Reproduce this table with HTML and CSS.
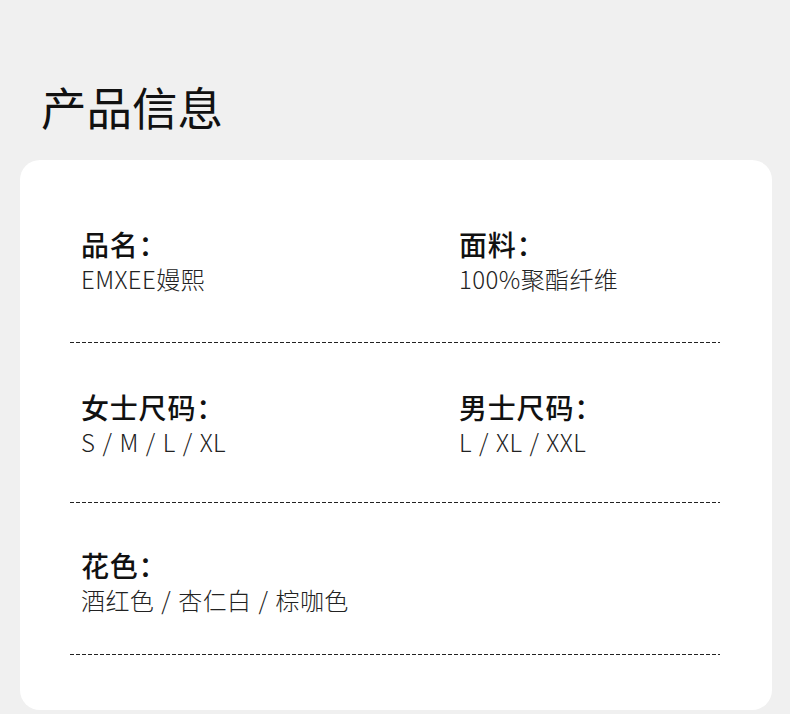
FILE: index.html
```html
<!DOCTYPE html>
<html lang="zh-CN">
<head>
<meta charset="utf-8">
<title>产品信息</title>
<link rel="stylesheet" href="styles.css">
</head>
<body>
<div class="page">
  <h1 class="title">产品信息</h1>
  <section class="card">
    <div class="row row-1">
      <div class="field">
        <div class="label">品名：</div>
        <div class="value">EMXEE嫚熙</div>
      </div>
      <div class="field">
        <div class="label">面料：</div>
        <div class="value">100%聚酯纤维</div>
      </div>
    </div>
    <div class="divider"></div>
    <div class="row row-2">
      <div class="field">
        <div class="label">女士尺码：</div>
        <div class="value">S / M / L / XL</div>
      </div>
      <div class="field">
        <div class="label">男士尺码：</div>
        <div class="value">L / XL / XXL</div>
      </div>
    </div>
    <div class="divider"></div>
    <div class="row row-3">
      <div class="field">
        <div class="label">花色：</div>
        <div class="value">酒红色 / 杏仁白 / 棕咖色</div>
      </div>
    </div>
    <div class="divider"></div>
  </section>
</div>
</body>
</html>
```

FILE: styles.css
```css
html, body {
  margin: 0;
  padding: 0;
}

body {
  background: #f0f0f0;
  font-family: "Noto Sans CJK SC", "Noto Sans", sans-serif;
  color: #111;
}

.page {
  width: 790px;
  height: 714px;
  overflow: hidden;
  padding-top: 83px;
  box-sizing: border-box;
}

.title {
  margin: 0 0 31px 41px;
  font-size: 45.5px;
  line-height: 46px;
  font-weight: 400;
  color: #111;
}

.card {
  margin: 0 18px 0 20px;
  height: 550px;
  box-sizing: border-box;
  background: #fff;
  border-radius: 20px;
  padding: 66px 52px 0 50px;
}

.row {
  display: grid;
  grid-template-columns: 378px 1fr;
  padding-left: 11px;
}

.row-1 { padding-bottom: 46px; }
.row-2 { padding-top: 46px; padding-bottom: 43px; }
.row-3 { padding-top: 44px; padding-bottom: 37px; }

.label {
  font-size: 28px;
  line-height: 36px;
  font-weight: 500;
  color: #111;
  letter-spacing: 0.8px;
}

.value {
  font-size: 24px;
  line-height: 34px;
  font-weight: 300;
  color: #222;
  letter-spacing: 0.4px;
  word-spacing: 1.4px;
}

.divider {
  height: 1px;
  background-image: repeating-linear-gradient(to right, #222 0 4px, transparent 4px 6px);
}
```
